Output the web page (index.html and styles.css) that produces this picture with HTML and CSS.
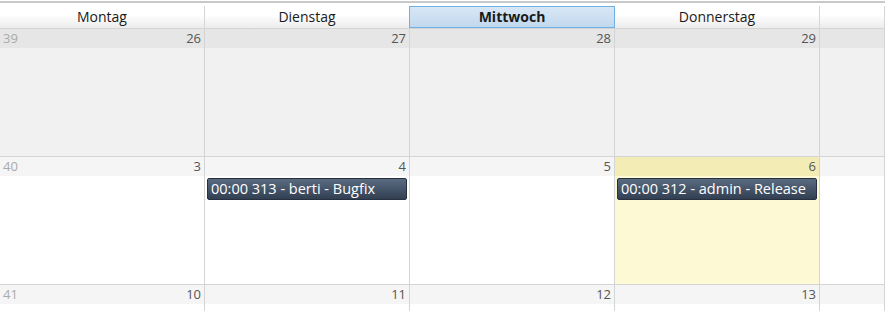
FILE: index.html
```html
<!DOCTYPE html>
<html lang="de">
<head>
    <meta charset="UTF-8">
    <meta name="viewport" content="width=device-width, initial-scale=1.0">
    <link rel="stylesheet" href="styles.css">
    <title>Kalender</title>
</head>
<body>
    <div class="calendar">
        <div class="head-row">
            <div class="head">Montag</div>
            <div class="head">Dienstag</div>
            <div class="head today-head">Mittwoch</div>
            <div class="head">Donnerstag</div>
            <div class="head"></div>
        </div>

        <div class="week other">
            <div class="day"><div class="num"><span class="wk">39</span><span>26</span></div></div>
            <div class="day"><div class="num"><span>27</span></div></div>
            <div class="day"><div class="num"><span>28</span></div></div>
            <div class="day"><div class="num"><span>29</span></div></div>
            <div class="day"><div class="num"></div></div>
        </div>

        <div class="week">
            <div class="day"><div class="num"><span class="wk">40</span><span>3</span></div></div>
            <div class="day">
                <div class="num"><span>4</span></div>
                <div class="event">00:00 313 - berti - Bugfix</div>
            </div>
            <div class="day"><div class="num"><span>5</span></div></div>
            <div class="day today">
                <div class="num"><span>6</span></div>
                <div class="event">00:00 312 - admin - Release</div>
            </div>
            <div class="day"><div class="num"></div></div>
        </div>

        <div class="week">
            <div class="day"><div class="num"><span class="wk">41</span><span>10</span></div></div>
            <div class="day"><div class="num"><span>11</span></div></div>
            <div class="day"><div class="num"><span>12</span></div></div>
            <div class="day"><div class="num"><span>13</span></div></div>
            <div class="day"><div class="num"></div></div>
        </div>
    </div>
</body>
</html>
```

FILE: styles.css
```css
body{
    margin: 0;
    background: #fff;
    font-family: "Open Sans", "Noto Sans", sans-serif;
    overflow: hidden;
}
.calendar{
    border-top: 2px solid #c9c9c9;
    margin-top: 1px;
    padding-top: 3px;
}
.head-row{
    display: grid;
    grid-template-columns: repeat(4, 205px) 1fr;
    border-bottom: 1px solid #d4d4d4;
}
.head{
    height: 22px;
    line-height: 21px;
    text-align: center;
    font-size: 14px;
    color: #1a1a1a;
    border-right: 1px solid #d6d6d6;
    background: linear-gradient(#ffffff, #ffffff 40%, #ececec);
}
.today-head{
    font-weight: bold;
    background: linear-gradient(#d8e7f6, #c2d8ee);
    border: 1px solid #6cb0e4;
    height: 20px;
    line-height: 19px;
    margin-left: -1px;
}
.week{
    display: grid;
    grid-template-columns: repeat(4, 205px) 1fr;
    border-bottom: 1px solid #d4d4d4;
}
.day{
    height: 127px;
    border-right: 1px solid #d4d4d4;
    background: #fff;
}
.num{
    display: flex;
    justify-content: flex-end;
    height: 19px;
    line-height: 19px;
    padding: 0 3px 0 3px;
    font-size: 13px;
    color: #555;
    background: #f5f5f5;
}
.wk{
    color: #aaa;
    margin-right: auto;
}
.other .day{
    background: #f1f1f1;
}
.other .num{
    background: #e6e6e6;
}
.today{
    background: #fdf9d5;
}
.today .num{
    background: #f3edb5;
}
.event{
    margin: 2px 2px 0 2px;
    height: 20px;
    line-height: 20px;
    padding: 0 3px;
    font-size: 14.5px;
    color: #fff;
    background: linear-gradient(#5a6b80, #323f53);
    border: 1px solid #27313f;
    border-radius: 2px;
    white-space: nowrap;
    overflow: hidden;
}
```
